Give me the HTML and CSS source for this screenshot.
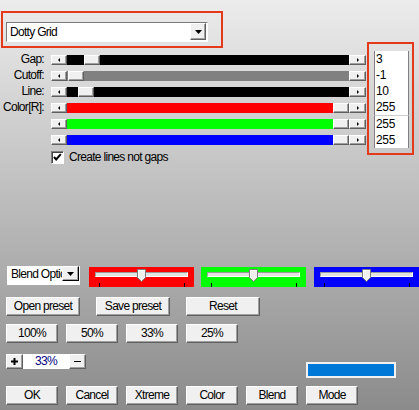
FILE: index.html
```html
<!DOCTYPE html>
<html>
<head>
<meta charset="utf-8">
<link rel="stylesheet" href="styles.css">
</head>
<body>
<div class="upper">
  <div class="left">
    <div class="preset-box">
      <div class="combo">
        <span class="combo-text">Dotty Grid</span>
        <span class="combo-btn r3d"><svg width="7" height="4" viewBox="0 0 7 4"><polygon points="0,0 7,0 3.5,4" fill="#000"/></svg></span>
      </div>
    </div>
    <div class="sliders">
      <div class="srow"><span class="lbl">Gap:</span><div class="sb"><span class="arr r3d"><i class="tri-l"></i></span><div class="track black"><span class="thumb r3d" style="margin-left:17px"></span></div><span class="arr rr r3d"><i class="tri-r"></i></span></div></div>
      <div class="srow"><span class="lbl">Cutoff:</span><div class="sb"><span class="arr r3d"><i class="tri-l"></i></span><div class="track gray"><span class="thumb r3d" style="margin-left:1px"></span></div><span class="arr rr r3d"><i class="tri-r"></i></span></div></div>
      <div class="srow"><span class="lbl">Line:</span><div class="sb"><span class="arr r3d"><i class="tri-l"></i></span><div class="track black"><span class="thumb r3d" style="margin-left:11px"></span></div><span class="arr rr r3d"><i class="tri-r"></i></span></div></div>
      <div class="srow"><span class="lbl">Color[R]:</span><div class="sb"><span class="arr r3d"><i class="tri-l"></i></span><div class="track red"><span class="thumb r3d" style="margin-left:266px"></span></div><span class="arr rr r3d"><i class="tri-r"></i></span></div></div>
      <div class="srow"><span class="lbl"></span><div class="sb"><span class="arr r3d"><i class="tri-l"></i></span><div class="track green"><span class="thumb r3d" style="margin-left:266px"></span></div><span class="arr rr r3d"><i class="tri-r"></i></span></div></div>
      <div class="srow"><span class="lbl"></span><div class="sb"><span class="arr r3d"><i class="tri-l"></i></span><div class="track blue"><span class="thumb r3d" style="margin-left:266px"></span></div><span class="arr rr r3d"><i class="tri-r"></i></span></div></div>
    </div>
    <div class="check">
      <span class="cbox"><svg width="11" height="11" viewBox="0 0 11 11"><path d="M2 5 L4.2 7.4 L8.8 2.2" fill="none" stroke="#000" stroke-width="2"/></svg></span>
      <span>Create lines not gaps</span>
    </div>
  </div>
  <div class="values">
    <div class="vgroup">
      <div class="vline">3</div>
      <div class="vline">-1</div>
      <div class="vline">10</div>
      <div class="vline">255</div>
    </div>
    <div class="vgroup">
      <div class="vline">255</div>
      <div class="vline">255</div>
    </div>
  </div>
</div>

<div class="lower">
  <div class="blend-row">
    <div class="bsel">
      <span class="bsel-text">Blend Options</span>
      <span class="bsel-btn r3d"><svg width="7" height="4" viewBox="0 0 7 4"><polygon points="0,0 7,0 3.5,4" fill="#000"/></svg></span>
    </div>
    <div class="cpanel p-red">
      <div class="ctrack"></div>
      <div class="ticks"><span class="tick"></span><span class="tick"></span></div>
      <svg class="cthumb" width="9" height="13" viewBox="0 0 9 13"><path d="M0.5 0.5H8.5V8.5L4.5 12.5L0.5 8.5Z" fill="#f0f0f0" stroke="#7a7a7a"/><path d="M1.5 8.2V1.5H7.5" fill="none" stroke="#fff"/></svg>
    </div>
    <div class="cpanel p-green">
      <div class="ctrack"></div>
      <div class="ticks"><span class="tick"></span><span class="tick"></span></div>
      <svg class="cthumb" width="9" height="13" viewBox="0 0 9 13"><path d="M0.5 0.5H8.5V8.5L4.5 12.5L0.5 8.5Z" fill="#f0f0f0" stroke="#7a7a7a"/><path d="M1.5 8.2V1.5H7.5" fill="none" stroke="#fff"/></svg>
    </div>
    <div class="cpanel p-blue">
      <div class="ctrack"></div>
      <div class="ticks"><span class="tick"></span><span class="tick"></span></div>
      <svg class="cthumb" width="9" height="13" viewBox="0 0 9 13"><path d="M0.5 0.5H8.5V8.5L4.5 12.5L0.5 8.5Z" fill="#f0f0f0" stroke="#7a7a7a"/><path d="M1.5 8.2V1.5H7.5" fill="none" stroke="#fff"/></svg>
    </div>
  </div>

  <div class="brow wide">
    <span class="btn r3d">Open preset</span>
    <span class="btn r3d">Save preset</span>
    <span class="btn r3d">Reset</span>
  </div>

  <div class="brow">
    <span class="btn r3d">100%</span>
    <span class="btn r3d">50%</span>
    <span class="btn r3d">33%</span>
    <span class="btn r3d">25%</span>
  </div>

  <div class="zrow">
    <span class="zbtn r3d"><svg width="7" height="7" viewBox="0 0 7 7"><rect x="0" y="2.5" width="7" height="2" fill="#000"/><rect x="2.5" y="0" width="2" height="7" fill="#000"/></svg></span>
    <span class="zfield">33%</span>
    <span class="zbtn r3d"><svg width="7" height="7" viewBox="0 0 7 7"><rect x="0" y="3" width="7" height="1" fill="#000"/></svg></span>
    <span class="bluebar"></span>
  </div>

  <div class="brow bottom">
    <span class="btn r3d">OK</span>
    <span class="btn r3d">Cancel</span>
    <span class="btn r3d">Xtreme</span>
    <span class="btn r3d">Color</span>
    <span class="btn r3d">Blend</span>
    <span class="btn r3d">Mode</span>
  </div>
</div>
</body>
</html>
```

FILE: styles.css
```css
html {
  height: 100%;
  background: linear-gradient(to bottom, #ececec 0, #8b8b8b 410px);
}
body {
  margin: 0;
  width: 419px;
  height: 410px;
  overflow: hidden;
  font-family: "Liberation Sans", Arial, sans-serif;
  font-size: 12px;
  letter-spacing: -0.7px;
  color: #000;
}

.r3d {
  background: #f0f0f0;
  box-sizing: border-box;
  border: 1px solid;
  border-color: #ffffff #5f5f5f #5f5f5f #ffffff;
  box-shadow: inset -1px -1px 0 #a0a0a0;
}

/* upper area */
.upper {
  display: flex;
  align-items: flex-start;
}
.left {
  width: 367px;
  flex: none;
}
.preset-box {
  margin: 11px 0 0 1px;
  width: 222px;
  height: 37px;
  box-sizing: border-box;
  border: 2px solid #e4391b;
  padding: 9px 0 0 3px;
}
.combo {
  width: 202px;
  height: 20px;
  box-sizing: border-box;
  background: #fff;
  border: 1px solid;
  border-color: #7a7a7a #ffffff #ffffff #7a7a7a;
  display: flex;
  align-items: flex-start;
  padding: 0 1px 1px 0;
}
.combo-text {
  flex: 1;
  padding-left: 3px;
  line-height: 18px;
}
.combo-btn {
  width: 16px;
  height: 17px;
  display: flex;
  align-items: center;
  justify-content: center;
}

.sliders {
  margin-top: 7px;
}
.srow {
  display: flex;
  align-items: flex-start;
  height: 10px;
  margin-bottom: 6px;
}
.lbl {
  width: 44px;
  margin-right: 7px;
  text-align: right;
  line-height: 8px;
  white-space: nowrap;
}
.sb {
  display: flex;
  height: 10px;
}
.arr {
  width: 16px;
  height: 10px;
  display: flex;
  align-items: center;
  justify-content: center;
}
.arr.rr {
  width: 17px;
}
.tri-l {
  width: 0;
  height: 0;
  border-top: 2px solid transparent;
  border-bottom: 2px solid transparent;
  border-right: 2px solid #000;
}
.tri-r {
  width: 0;
  height: 0;
  border-top: 2px solid transparent;
  border-bottom: 2px solid transparent;
  border-left: 2px solid #000;
}
.track {
  width: 282px;
  height: 10px;
  display: flex;
}
.track.black { background: #000; }
.track.gray { background: #808080; }
.track.red { background: #ff0000; }
.track.green { background: #00ff00; }
.track.blue { background: #0000ff; }
.thumb {
  width: 16px;
  height: 10px;
  flex: none;
}

.check {
  display: flex;
  align-items: center;
  gap: 5px;
  margin: 2px 0 0 51px;
  height: 13px;
  line-height: 13px;
}
.cbox {
  width: 13px;
  height: 13px;
  box-sizing: border-box;
  background: #fff;
  border: 1px solid;
  border-color: #808080 #ffffff #ffffff #808080;
  box-shadow: inset 1px 1px 0 #404040;
  display: flex;
  align-items: center;
  justify-content: center;
}

.values {
  margin-top: 42px;
  width: 47px;
  height: 113px;
  box-sizing: border-box;
  border: 2px solid #e4391b;
  padding: 7px 3px 5px 5px;
}
.vgroup {
  background: #fff;
  border-left: 1px solid #808080;
  border-right: 1px solid #808080;
}
.vgroup + .vgroup {
  border-top: 1px solid #cfcfcf;
}
.vline {
  height: 16px;
  line-height: 16px;
  padding-left: 1px;
  letter-spacing: -0.3px;
}

/* lower area */
.lower {
  margin-top: 102px;
}
.blend-row {
  display: flex;
  align-items: flex-start;
  height: 21px;
  padding-left: 7px;
}
.bsel {
  width: 73px;
  height: 19px;
  box-sizing: border-box;
  background: #fff;
  display: flex;
  align-items: flex-start;
  padding-right: 1px;
}
.bsel-text {
  flex: 1;
  overflow: hidden;
  white-space: nowrap;
  padding-left: 4px;
  line-height: 17px;
}
.bsel-btn {
  width: 17px;
  height: 15px;
  flex: none;
  display: flex;
  align-items: center;
  justify-content: center;
  border-color: #ffffff #000000 #000000 #ffffff;
}
.cpanel {
  position: relative;
  width: 105px;
  height: 20px;
  margin-top: 1px;
  box-sizing: border-box;
  padding: 5px 6px 0;
}
.p-red { background: #ff0000; margin-left: 9px; }
.p-green { background: #00ff00; margin-left: 7px; }
.p-blue { background: #0000ff; margin-left: 8px; }
.ctrack {
  height: 5px;
  box-sizing: border-box;
  border: 1px solid;
  border-color: #9a9a9a #ffffff #ffffff #9a9a9a;
  background: #e2e2e2;
}
.ticks {
  display: flex;
  justify-content: space-between;
  padding: 0 3px 0 4px;
  margin-top: 6px;
  height: 4px;
}
.tick {
  width: 1px;
  height: 4px;
  background: #000;
}
.cthumb {
  position: absolute;
  left: 48px;
  top: 2px;
}

.brow {
  display: flex;
  gap: 8px;
  padding-left: 6px;
  margin-top: 8px;
}
.brow.wide {
  gap: 16px;
  margin-top: 10px;
}
.brow.wide .btn {
  width: 74px;
}
.btn {
  width: 52px;
  height: 19px;
  line-height: 17px;
  text-align: center;
  white-space: nowrap;
}

.zrow {
  display: flex;
  align-items: flex-start;
  padding-left: 6px;
  margin-top: 11px;
}
.zbtn {
  width: 17px;
  height: 15px;
  display: flex;
  align-items: center;
  justify-content: center;
}
.zfield {
  width: 46px;
  height: 15px;
  background: #fff;
  color: #000080;
  text-align: center;
  line-height: 15px;
}
.bluebar {
  margin-left: 220px;
  margin-top: 8px;
  width: 90px;
  height: 16px;
  box-sizing: border-box;
  border: 2px solid #f2f2f2;
  background: #0078d7;
}
```
